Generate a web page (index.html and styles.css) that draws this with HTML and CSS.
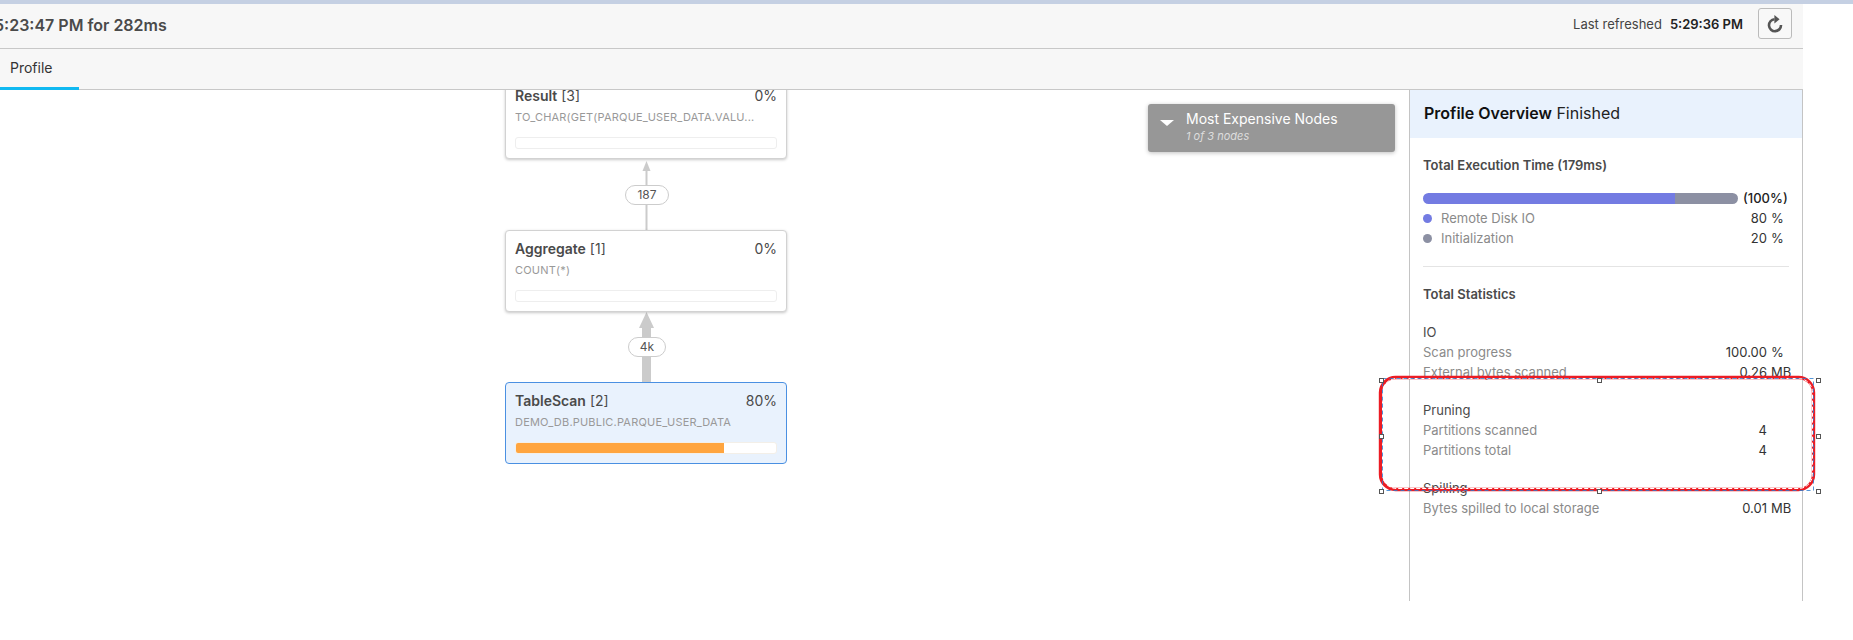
FILE: index.html
```html
<!DOCTYPE html>
<html lang="en">
<head>
<meta charset="utf-8">
<title>Query Profile</title>
<link rel="stylesheet" href="styles.css">
</head>
<body>
<div class="topline"></div>
<div class="shell">
  <header class="header">
    <h1 class="title">5:23:47 PM for 282ms</h1>
    <div class="refresh">
      <span class="refresh-label">Last refreshed</span>
      <strong class="refresh-time">5:29:36 PM</strong>
      <button class="refresh-btn" aria-label="Refresh">
        <svg width="18" height="20" viewBox="0 0 18 20"><path class="refresh-arc" d="M8.5 5.2A6 6 0 1 0 15 11"/><path class="refresh-head" d="M8.4 1L13.6 5.2L8.4 9.4Z"/></svg>
      </button>
    </div>
  </header>
  <nav class="tabs"><a class="tab">Profile</a></nav>
  <main class="main">
    <section class="canvas">
      <svg class="edges" width="1409" height="511" viewBox="0 0 1409 511">
        <rect class="edge" x="645.5" y="78" width="2" height="62"/>
        <path class="edge" d="M646.5 71L650.5 81H642.5Z"/>
        <rect class="edge" x="642" y="232" width="9" height="60"/>
        <path class="edge" d="M646.5 222L654 238H639Z"/>
      </svg>
      <div class="pill pill-a">187</div>
      <div class="pill pill-b">4k</div>

      <article class="node node-result">
        <div class="node-head"><span class="node-name"><b>Result</b> [3]</span><span>0%</span></div>
        <div class="node-sub">TO_CHAR(GET(PARQUE_USER_DATA.VALU...</div>
        <div class="node-track"></div>
      </article>
      <article class="node node-agg">
        <div class="node-head"><span class="node-name"><b>Aggregate</b> [1]</span><span>0%</span></div>
        <div class="node-sub">COUNT(*)</div>
        <div class="node-track"></div>
      </article>
      <article class="node node-scan">
        <div class="node-head"><span class="node-name"><b>TableScan</b> [2]</span><span>80%</span></div>
        <div class="node-sub">DEMO_DB.PUBLIC.PARQUE_USER_DATA</div>
        <div class="node-track"><div class="node-fill" style="width:80%"></div></div>
      </article>

      <div class="expensive">
        <span class="caret"></span>
        <div>
          <div class="expensive-title">Most Expensive Nodes</div>
          <div class="expensive-sub">1 of 3 nodes</div>
        </div>
      </div>
    </section>

    <aside class="panel">
      <div class="panel-head"><b>Profile Overview</b> Finished</div>
      <div class="panel-body">
        <h2 class="section-title">Total Execution Time (179ms)</h2>
        <div class="total-row">
          <div class="bar"><div class="bar-a" style="width:80%"></div><div class="bar-b"></div></div>
          <span class="total-pct">(100%)</span>
        </div>
        <div class="row"><span class="label"><i class="dot dot-a"></i>Remote Disk IO</span><span class="num">80</span><span class="unit">%</span></div>
        <div class="row"><span class="label"><i class="dot dot-b"></i>Initialization</span><span class="num">20</span><span class="unit">%</span></div>
        <hr class="divider">
        <h2 class="section-title stats-title">Total Statistics</h2>

        <div class="group">
          <div class="group-name">IO</div>
          <div class="row"><span class="label">Scan progress</span><span class="num">100.00</span><span class="unit">%</span></div>
          <div class="row"><span class="label">External bytes scanned</span><span class="num">0.26</span><span class="unit">MB</span></div>
        </div>
        <div class="group">
          <div class="group-name">Pruning</div>
          <div class="row"><span class="label">Partitions scanned</span><span class="num">4</span><span class="unit"></span></div>
          <div class="row"><span class="label">Partitions total</span><span class="num">4</span><span class="unit"></span></div>
        </div>
        <div class="group">
          <div class="group-name">Spilling</div>
          <div class="row"><span class="label">Bytes spilled to local storage</span><span class="num">0.01</span><span class="unit">MB</span></div>
        </div>
      </div>
    </aside>
  </main>
</div>

<svg class="annotation" width="446" height="124" viewBox="0 0 446 124">
  <rect class="anno-red" x="4.5" y="4.5" width="433" height="112" rx="15"/>
  <rect class="anno-white" x="6.5" y="5.5" width="430" height="110" rx="14"/>
  <rect class="anno-blue" x="6.5" y="5.5" width="431" height="112"/>
  <g class="anno-handles">
    <rect x="3.5" y="5.5" width="4" height="4"/><rect x="221.5" y="5.5" width="4" height="4"/><rect x="440.5" y="5.5" width="4" height="4"/>
    <rect x="3.5" y="61.5" width="4" height="4"/><rect x="440.5" y="61.5" width="4" height="4"/>
    <rect x="3.5" y="116.5" width="4" height="4"/><rect x="221.5" y="116.5" width="4" height="4"/><rect x="440.5" y="116.5" width="4" height="4"/>
  </g>
</svg>
</body>
</html>
```

FILE: styles.css
```css
* { box-sizing: border-box; }
html, body { margin: 0; padding: 0; height: 640px; overflow: hidden; background: #fff; }
body { font-family: Inter, "Liberation Sans", sans-serif; color: #333; }

.topline { height: 4px; background: #c5d0e3; }
.shell { width: 1803px; }

.header {
  height: 45px;
  background: #f7f7f7;
  border-bottom: 1px solid #c8c8c8;
  display: flex;
  align-items: center;
  justify-content: space-between;
  overflow: hidden;
}
.title { margin: 0 0 2px -6px; font-size: 16px; font-weight: 600; color: #4a4a4a; white-space: nowrap; }
.refresh { display: flex; align-items: center; font-size: 13px; margin: -5px 11px 0 0; }
.refresh-label { color: #444; }
.refresh-time { margin-left: 8px; font-weight: 600; color: #222; }
.refresh-btn {
  margin-left: 15px;
  width: 34px; height: 31px;
  padding: 0;
  display: flex; align-items: center; justify-content: center;
  background: #f8f8f8;
  border: 1px solid #bbb;
  border-radius: 3px;
}
.refresh-arc { fill: none; stroke: #555; stroke-width: 2.6; }
.refresh-head { fill: #555; }

.tabs {
  height: 41px;
  background: #f7f7f7;
  border-bottom: 1px solid #c8c8c8;
  display: flex;
}
.tab {
  width: 79px;
  height: 41px;
  padding: 10px 0 0 10px;
  font-size: 14px;
  line-height: 18px;
  color: #333;
  border-bottom: 3px solid #11b9f1;
}

.main { display: flex; height: 511px; }
.canvas { position: relative; width: 1409px; overflow: hidden; }
.edges { position: absolute; left: 0; top: 0; }
.edge { fill: #cbcbcb; }

.pill {
  position: absolute;
  height: 20px;
  background: #fff;
  border: 1px solid #ccc;
  border-radius: 10px;
  font-size: 12px;
  line-height: 18px;
  text-align: center;
  color: #555;
}
.pill-a { left: 625px; top: 95px; width: 44px; }
.pill-b { left: 628px; top: 247px; width: 38px; }

.node {
  position: absolute;
  left: 505px;
  width: 282px;
  height: 82px;
  padding: 9px 9px 0;
  background: #fff;
  border: 1px solid #d2d2d2;
  border-radius: 4px;
  box-shadow: 0 1px 3px rgba(0, 0, 0, .22);
}
.node-result { top: -13px; }
.node-agg { top: 140px; }
.node-scan { top: 292px; background: #e9f2fd; border-color: #4a90e2; box-shadow: none; }
.node-head { display: flex; justify-content: space-between; font-size: 14px; line-height: 18px; color: #4a4a4a; }
.node-name b { font-weight: 600; }
.node-sub { margin-top: 4px; font-size: 11px; line-height: 16px; letter-spacing: .2px; color: #999; white-space: nowrap; }
.node-track {
  margin-top: 12px;
  height: 12px;
  background: #fff;
  border: 1px solid #eee;
  border-radius: 3px;
  overflow: hidden;
}
.node-scan .node-track { border-color: #f3efe8; }
.node-fill { height: 100%; background: #ffa53f; }

.expensive {
  position: absolute;
  left: 1148px;
  top: 14px;
  width: 247px;
  height: 48px;
  padding: 5px 0 0 38px;
  background: #979797;
  border-radius: 3px;
  box-shadow: 0 1px 4px rgba(0, 0, 0, .25);
}
.caret {
  position: absolute;
  left: 12px;
  top: 16px;
  border-style: solid;
  border-width: 6px 7.5px 0;
  border-color: #fff transparent transparent;
}
.expensive-title { font-size: 14px; line-height: 20px; color: #fff; }
.expensive-sub { font-size: 11px; line-height: 15px; font-style: italic; color: #ddd; }

.panel {
  width: 394px;
  border-left: 1px solid #c4c4c4;
  border-right: 1px solid #c4c4c4;
  background: #fff;
}
.panel-head {
  height: 48px;
  padding: 0 14px;
  background: #e9f2fd;
  font-size: 16px;
  line-height: 46px;
  color: #222;
}
.panel-head b { font-weight: 600; color: #111; }
.panel-body { padding: 17px 13px 0 13px; }
.section-title { margin: 0; font-size: 13px; line-height: 20px; font-weight: 600; color: #4a4a4a; }
.stats-title { margin-top: 17px; }

.total-row { display: flex; align-items: center; margin-top: 13px; height: 20px; }
.bar { display: flex; width: 315px; height: 11px; border-radius: 6px; overflow: hidden; }
.bar-a { background: #737be2; }
.bar-b { flex: 1; background: #8c90a3; }
.total-pct { margin-left: 5px; font-size: 13px; font-weight: 500; color: #222; }

.row {
  display: grid;
  grid-template-columns: 1fr auto 21px;
  column-gap: 1px;
  font-size: 13px;
  line-height: 20px;
  color: #333;
}
.label { color: #8a8a8a; display: flex; align-items: center; }
.unit { padding-left: 3px; }
.dot { width: 9px; height: 9px; border-radius: 50%; margin-right: 9px; }
.dot-a { background: #737be2; }
.dot-b { background: #8c90a3; }

.divider { margin: 18px 0 0; height: 1px; border: 0; background: #e4e4e4; }
.stats-title { margin-top: 17px; }
.group { margin-top: 18px; }
.stats-title + .group { margin-top: 18px; }
.group-name { font-size: 13px; line-height: 20px; color: #4a4a4a; }

.annotation { position: absolute; left: 1376px; top: 373px; }
.anno-red { fill: none; stroke: #ec1c24; stroke-width: 3.4; }
.anno-white { fill: none; stroke: #fff; stroke-width: 1; stroke-dasharray: 4 2; }
.anno-blue { fill: none; stroke: #2a7ccf; stroke-width: 1; stroke-dasharray: 4 3; opacity: .8; }
.anno-handles rect { fill: #fff; stroke: #555; stroke-width: 1; }
```
